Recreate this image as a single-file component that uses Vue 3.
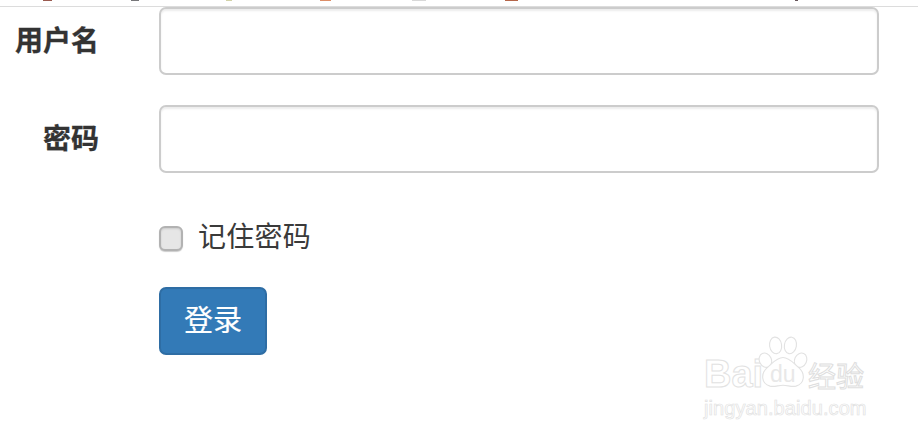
<script setup>
const specks = [
  { x: 43, w: 9, c: '#9a5a50' },
  { x: 131, w: 8, c: '#77777a' },
  { x: 226, w: 6, c: '#d2d2a8' },
  { x: 320, w: 11, c: '#dc8e68' },
  { x: 412, w: 14, c: '#d8d8d8' },
  { x: 505, w: 13, c: '#b5664a' },
  { x: 795, w: 3, c: '#66555a' }
]
</script>

<template>
  <div class="page">
    <div class="topbar">
      <i
        v-for="s in specks"
        :key="s.x"
        class="speck"
        :style="{ left: s.x + 'px', width: s.w + 'px', background: s.c }"
      ></i>
    </div>
    <form class="form" @submit.prevent>
      <div class="row">
        <label class="label">用户名</label>
        <input class="input" type="text" />
      </div>
      <div class="row">
        <label class="label">密码</label>
        <input class="input" type="password" />
      </div>
      <div class="row check-row">
        <span class="check"></span>
        <span class="check-text">记住密码</span>
      </div>
      <div class="row">
        <button class="btn" type="submit">登录</button>
      </div>
    </form>

    <div class="mark">
      <div class="mark-top">
        <span class="mark-word">Bai</span>
        <span class="paw">
          <svg viewBox="0 0 54 58" fill="#fff" stroke="#e2e2e2" stroke-width="1.2">
            <ellipse cx="8" cy="26" rx="6.5" ry="8" transform="rotate(-25 8 26)" />
            <ellipse cx="19" cy="10" rx="6.5" ry="9" transform="rotate(-8 19 10)" />
            <ellipse cx="35" cy="10" rx="6.5" ry="9" transform="rotate(10 35 10)" />
            <ellipse cx="46" cy="26" rx="6.5" ry="8" transform="rotate(25 46 26)" />
            <path d="M27 23c7 0 11 6 17 11 7 6 7 17-3 20-5 1-9-1-14-1s-9 2-14 1C3 51 3 40 10 34c6-5 10-11 17-11z" />
          </svg>
          <span class="mark-du">du</span>
        </span>
        <span class="mark-cn">经验</span>
      </div>
      <div class="mark-url">jingyan.baidu.com</div>
    </div>
  </div>
</template>

<style>
html, body { margin: 0; background: #fff; }
</style>

<style scoped>
.page {
  position: relative;
  width: 918px;
  height: 435px;
  overflow: hidden;
  background: #fff;
  color: #333;
  font-family: "Liberation Sans", "Noto Sans CJK SC", sans-serif;
}
.topbar {
  position: relative;
  height: 6px;
  border-bottom: 1px solid #dcdcdc;
}
.speck {
  position: absolute;
  top: 0;
  height: 1px;
}
.form {
  display: flex;
  flex-direction: column;
  gap: 30px;
}
.row {
  display: flex;
  align-items: center;
  padding-left: 159px;
  position: relative;
}
.label {
  position: absolute;
  right: calc(100% - 99px);
  font-size: 28px;
  font-weight: 700;
  line-height: 40px;
  top: 15px;
  white-space: nowrap;
  -webkit-text-stroke: 0.3px #333;
}
.input {
  width: 720px;
  height: 68px;
  box-sizing: border-box;
  border: 2px solid #ccc;
  border-radius: 7px;
  background: #fff;
  box-shadow: inset 0 2px 2px rgba(0, 0, 0, 0.075);
  outline: none;
}
.check-row {
  gap: 15px;
  height: 40px;
  margin-top: 15px;
  margin-bottom: -1px;
}
.check {
  width: 24px;
  height: 25px;
  box-sizing: border-box;
  border: 2px solid #b2b2b2;
  border-radius: 6px;
  background: #e6e6e6;
  box-shadow: inset 0 1px 2px rgba(0, 0, 0, 0.12), 0 1px 1px rgba(0, 0, 0, 0.2);
}
.check-text {
  font-size: 28px;
  line-height: 40px;
  color: #3a3a3a;
  letter-spacing: 0.25px;
}
.btn {
  width: 108px;
  height: 68px;
  box-sizing: border-box;
  padding: 0;
  border: 2px solid #2e6da4;
  border-radius: 7px;
  background: #337ab7;
  color: #fff;
  font: 29px/42px "Liberation Sans", "Noto Sans CJK SC", sans-serif;
  -webkit-text-stroke: 0.2px #fff;
}
.mark {
  position: absolute;
  left: 704px;
  top: 335px;
  width: 164px;
  color: #fff;
}
.mark-top {
  display: flex;
  align-items: flex-end;
  height: 56px;
}
.mark-word {
  width: 54px;
  font: 700 38px/40px "Liberation Sans", sans-serif;
  color: #fff;
  -webkit-text-stroke: 1px #e2e2e2;
  margin-bottom: -3px;
  flex: none;
  white-space: nowrap;
}
.paw {
  position: relative;
  width: 50px;
  height: 56px;
  flex: none;
}
.paw svg {
  display: block;
  width: 50px;
  height: 56px;
}
.mark-du {
  position: absolute;
  left: 12px;
  top: 27px;
  font: 400 23px/24px "Liberation Sans", sans-serif;
  color: #e8e8e8;
}
.mark-cn {
  font: 400 28px/32px "Noto Sans CJK SC", sans-serif;
  color: #fff;
  -webkit-text-stroke: 1px #dedede;
  white-space: nowrap;
}
.mark-url {
  margin-top: 6px;
  font: 400 20px/22px "Liberation Sans", sans-serif;
  letter-spacing: 0.08px;
  color: #fff;
  -webkit-text-stroke: 0.7px #e2e2e2;
  white-space: nowrap;
}
</style>
